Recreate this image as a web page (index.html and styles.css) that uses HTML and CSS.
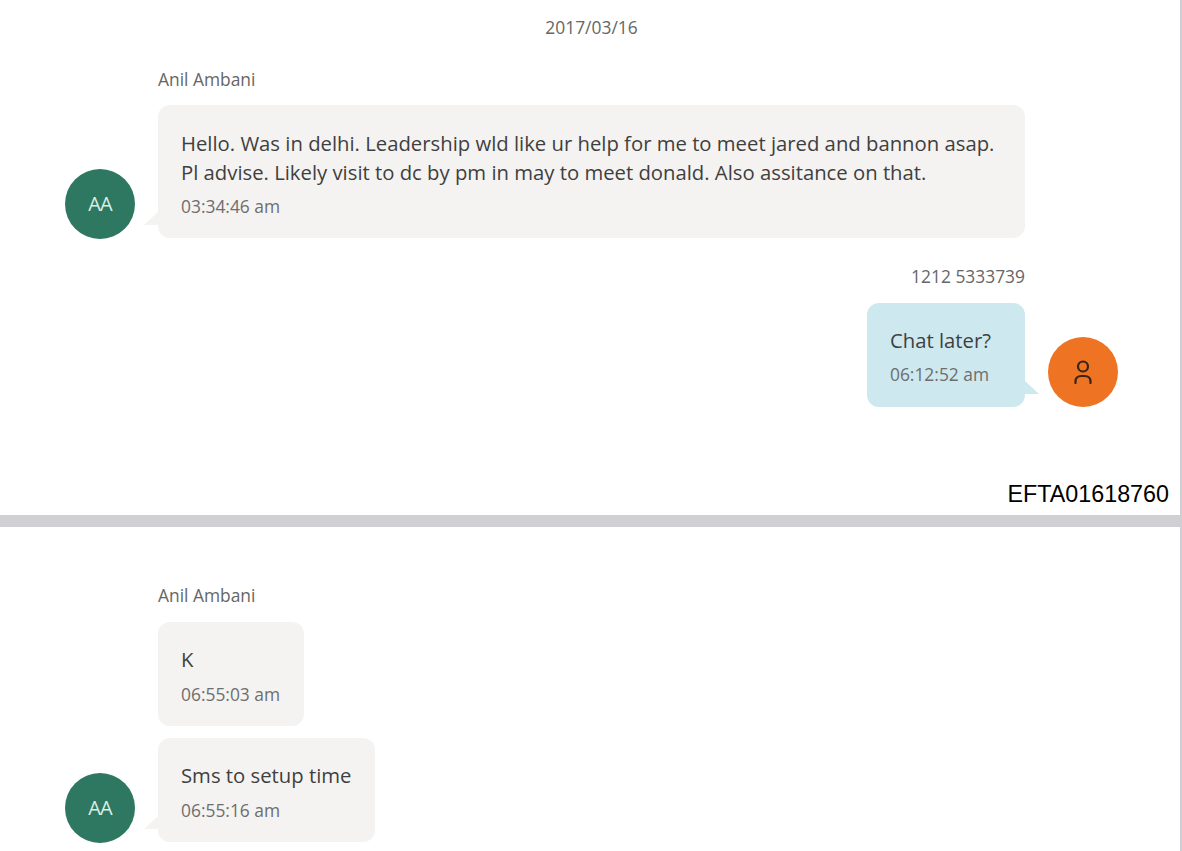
FILE: index.html
```html
<!DOCTYPE html>
<html lang="en">
<head>
<meta charset="utf-8">
<title>Chat</title>
<link rel="stylesheet" href="styles.css">
</head>
<body>
<section class="page page-first">
  <div class="date">2017/03/16</div>
  <div class="group">
    <div class="name">Anil Ambani</div>
    <div class="row">
      <div class="avatar avatar-green">AA</div>
      <div class="bubble bubble-in bubble-wide">
        <p class="text">Hello. Was in delhi. Leadership wld like ur help for me to meet jared and bannon asap.<br>Pl advise. Likely visit to dc by pm in may to meet donald. Also assitance on that.</p>
        <div class="time">03:34:46 am</div>
      </div>
    </div>
  </div>
  <div class="group group-out">
    <div class="name name-out">1212 5333739</div>
    <div class="row row-out">
      <div class="bubble bubble-short bubble-out">
        <p class="text">Chat later?</p>
        <div class="time">06:12:52 am</div>
      </div>
      <div class="avatar avatar-orange">
        <svg class="person" viewBox="0 0 24 24" width="24" height="24" fill="none" stroke="#3a2413" stroke-width="2.2" stroke-linecap="round"><circle cx="12" cy="6.5" r="5"/><path d="M4.5 23v-1.5c0-4 2.8-5.5 6-5.5h3c3.2 0 6 1.5 6 5.5V23"/></svg>
      </div>
    </div>
  </div>
  <div class="stamp">EFTA01618760</div>
</section>
<div class="divider"></div>
<section class="page page-second">
  <div class="group">
    <div class="name">Anil Ambani</div>
    <div class="row">
      <div class="avatar-slot"></div>
      <div class="bubble bubble-short">
        <p class="text">K</p>
        <div class="time">06:55:03 am</div>
      </div>
    </div>
    <div class="row row-next">
      <div class="avatar avatar-green">AA</div>
      <div class="bubble bubble-short bubble-in">
        <p class="text">Sms to setup time</p>
        <div class="time">06:55:16 am</div>
      </div>
    </div>
  </div>
</section>
</body>
</html>
```
FILE: styles.css
```css
* {
  box-sizing: border-box;
}

html,
body {
  margin: 0;
  height: 851px;
  overflow: hidden;
  background: #fff;
}

body {
  font-family: "Open Sans", "Noto Sans", sans-serif;
  color: #3f3f3f;
  border-right: 2px solid #cfcfd3;
  width: 1182px;
}

.page-first {
  height: 515px;
  padding-top: 15px;
  position: relative;
}

.page-second {
  padding-top: 56px;
}

.divider {
  height: 12px;
  background: #d0d0d4;
}

.date {
  text-align: center;
  font-size: 17.4px;
  line-height: 24px;
  color: #666;
  margin-bottom: 28px;
  padding-left: 3px;
}

.group {
  padding-left: 65px;
  width: 1118px;
}

.group-out {
  margin-top: 26px;
}

.name {
  margin-left: 93px;
  font-size: 17.4px;
  line-height: 24px;
  color: #666;
  margin-bottom: 15px;
}

.page-first .name {
  margin-bottom: 14px;
}

.page-first .name-out {
  margin-left: 0;
  margin-right: 93px;
  text-align: right;
  margin-bottom: 15px;
}

.row {
  display: flex;
  align-items: flex-end;
  gap: 23px;
}

.row-out {
  justify-content: flex-end;
}

.row-next {
  margin-top: 12px;
}

.avatar,
.avatar-slot {
  flex: none;
  width: 70px;
  height: 70px;
}

.avatar {
  border-radius: 50%;
  display: flex;
  align-items: center;
  justify-content: center;
  color: #d9eee4;
  font-size: 20px;
  letter-spacing: -0.8px;
  padding-bottom: 2px;
}

.avatar-green {
  background: #2e7760;
  margin-bottom: -1px;
}

.avatar-orange {
  background: #ee7322;
  padding-bottom: 0;
}

.person {
  display: block;
}

.bubble {
  position: relative;
  background: #f4f3f1;
  border-radius: 12px;
  padding: 24px 24px 20px 23px;
}

.bubble-short {
  padding-top: 23px;
}

.bubble-short .time {
  margin-top: 8px;
}

.bubble-wide {
  width: 867px;
}

.bubble-in::before {
  content: "";
  position: absolute;
  left: -14px;
  bottom: 13px;
  border-bottom: 13px solid #f4f3f1;
  border-left: 14px solid transparent;
}

.bubble-out {
  background: #cde8ef;
  padding-right: 34px;
}

.bubble-out .time {
  margin-top: 7px;
  padding-bottom: 1px;
}

.bubble-out::after {
  content: "";
  position: absolute;
  right: -14px;
  bottom: 13px;
  border-bottom: 13px solid #cde8ef;
  border-right: 14px solid transparent;
}

.text {
  margin: 0;
  font-size: 20.3px;
  line-height: 29px;
  color: #3f3f3f;
  white-space: nowrap;
}

.time {
  margin-top: 7px;
  font-size: 17.4px;
  line-height: 24px;
  color: #6e6e6e;
}

.stamp {
  position: absolute;
  right: 11px;
  bottom: 8px;
  font-family: "Liberation Sans", Arial, sans-serif;
  font-size: 23.3px;
  line-height: 25px;
  color: #000;
}
```
